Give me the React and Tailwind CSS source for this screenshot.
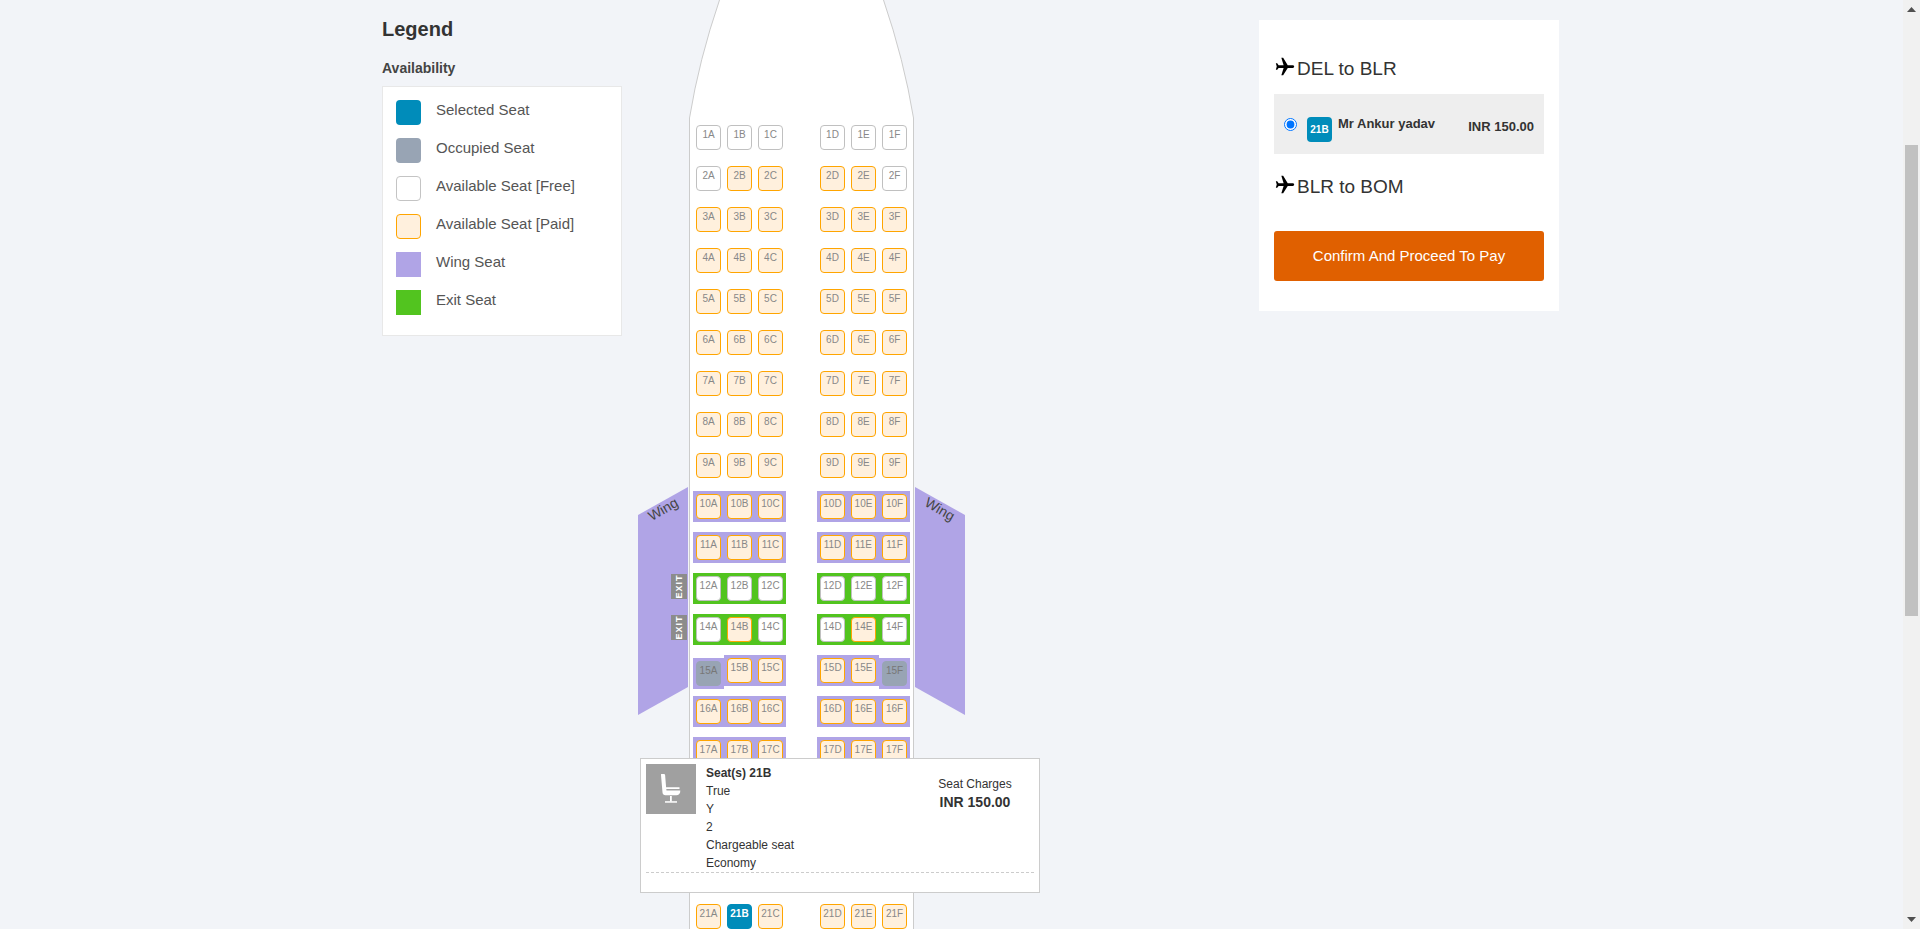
import React from 'react'

const legend = [
  { label: 'Selected Seat', box: 'bg-[#008cba] rounded-[4px]' },
  { label: 'Occupied Seat', box: 'bg-[#98a4b4] rounded-[4px]' },
  { label: 'Available Seat [Free]', box: 'bg-white border border-[#c4c4c4] rounded-[4px]' },
  { label: 'Available Seat [Paid]', box: 'bg-[#fff0dd] border border-[#ffa500] rounded-[4px]' },
  { label: 'Wing Seat', box: 'bg-[#b0a4e6]' },
  { label: 'Exit Seat', box: 'bg-[#52c41f]' },
]

// f = free, p = paid, o = occupied, s = selected
const rows = [
  { no: 1, seats: 'ffffff' },
  { no: 2, seats: 'fppppf' },
  { no: 3, seats: 'pppppp' },
  { no: 4, seats: 'pppppp' },
  { no: 5, seats: 'pppppp' },
  { no: 6, seats: 'pppppp' },
  { no: 7, seats: 'pppppp' },
  { no: 8, seats: 'pppppp' },
  { no: 9, seats: 'pppppp' },
  { no: 10, seats: 'pppppp', band: 'wing' },
  { no: 11, seats: 'pppppp', band: 'wing' },
  { no: 12, seats: 'ffffff', band: 'exit' },
  { no: 14, seats: 'fpffpf', band: 'exit' },
  { no: 15, seats: 'oppppo', band: 'wing' },
  { no: 16, seats: 'pppppp', band: 'wing' },
  { no: 17, seats: 'pppppp', band: 'wing' },
]

const seatStyles = {
  f: 'bg-white border border-[#c0c0c0] text-[#888]',
  p: 'bg-[#fff0dd] border border-[#ffa500] text-[#888]',
  o: 'bg-[#98a4b4] border border-[#98a4b4] text-[#777]',
  s: 'bg-[#008cba] border border-[#008cba] text-white font-bold',
}

const bandStyles = {
  wing: 'bg-[#b0a4e6]',
  exit: 'bg-[#52c41f]',
}

function Seat({ label, type, band }) {
  return (
    <div className={`w-[31px] h-[31px] p-[3px] ${band ? bandStyles[band] : ''} ${type === 'o' ? 'mt-[3px]' : ''}`}>
      <div className={`w-[25px] h-[25px] rounded-[4px] text-center text-[10px] leading-[18px] ${seatStyles[type]}`}>
        {label}
      </div>
    </div>
  )
}

function SeatRow({ row }) {
  const letters = ['A', 'B', 'C', 'D', 'E', 'F']
  const cell = (i) => (
    <Seat key={i} label={`${row.no}${letters[i]}`} type={row.seats[i]} band={row.band} />
  )
  return (
    <div className="flex justify-between items-start h-[31px] mb-[10px]">
      <div className="flex items-start">{[0, 1, 2].map(cell)}</div>
      <div className="flex items-start">{[3, 4, 5].map(cell)}</div>
    </div>
  )
}

function ExitTag({ className }) {
  return (
    <div className={`absolute left-[-18px] w-[16px] h-[25px] bg-[#8c8c8c] flex items-center justify-center ${className}`}>
      <span className="-rotate-90 text-white text-[9px] font-bold tracking-[1px] leading-none">EXIT</span>
    </div>
  )
}

function Wing({ side }) {
  const left = side === 'left'
  return (
    <div className={`absolute top-[487px] w-[50px] h-[228px] ${left ? 'left-[-51px]' : 'right-[-51px]'}`}>
      <svg width="50" height="228" className="block">
        <polygon
          points={left ? '50,0 0,28 0,228 50,200' : '0,0 50,28 50,228 0,200'}
          fill="#b0a4e6"
        />
      </svg>
      <span className={`absolute top-[15px] left-[9px] text-[14px] leading-none text-[#444] ${left ? '-rotate-[30deg]' : 'rotate-[30deg]'}`}>
        Wing
      </span>
    </div>
  )
}

function SeatMap() {
  return (
    <div className="relative w-[225px] shrink-0">
      <svg width="225" height="118" className="block">
        <path d="M30.5 0 Q10 60 0.5 118 L224.5 118 Q215 60 194.5 0 Z" fill="#fff" />
        <path d="M30.5 0 Q10 60 0.5 118 M194.5 0 Q215 60 224.5 118" fill="none" stroke="#ccc" strokeWidth="1" />
      </svg>
      <div className="bg-white border-x border-[#ccc] pt-[4px] pl-[3px] pr-[3px]">
        {rows.map((row) => <SeatRow key={row.no} row={row} />)}
        {/* rows 18-20 sit behind the seat popup */}
        <div className="h-[123px]" />
        <SeatRow row={{ no: 21, seats: 'pspppp' }} />
      </div>
      <Wing side="left" />
      <Wing side="right" />
      <ExitTag className="top-[574px]" />
      <ExitTag className="top-[615px]" />
      <SeatPopup />
    </div>
  )
}

function SeatPopup() {
  return (
    <div className="absolute left-[-49px] top-[758px] w-[400px] h-[135px] bg-white border border-[#ccc] px-[5px] pt-[5px] text-[12px] leading-[18px] text-[#333]">
      <div className="flex h-[108px]">
        <div className="w-[50px] h-[50px] bg-[#a0a0a0] shrink-0">
          <svg width="50" height="50" viewBox="0 0 50 50" fill="#fff">
            <path d="M15.5 10h2.5c.6 0 1 .4 1.1 1l1 12.3H33.5v1.6H20.3l.2 1.6h13.8c.2 3-1.5 4.8-4 4.8H19.5c-1.8 0-2.8-1-3-2.7L15 11c0-.5 0-1 .5-1z" />
            <rect x="24" y="32" width="1.8" height="5.5" />
            <rect x="19" y="37.2" width="12" height="1.5" />
          </svg>
        </div>
        <div className="ml-[10px] flex-1">
          <div className="font-bold">Seat(s) 21B</div>
          <div>True</div>
          <div>Y</div>
          <div>2</div>
          <div>Chargeable seat</div>
          <div>Economy</div>
        </div>
        <div className="w-[118px] pt-[11px] text-center">
          <div>Seat Charges</div>
          <div className="text-[14px] font-bold">INR 150.00</div>
        </div>
      </div>
      <div className="border-t border-dashed border-[#ccc]" />
    </div>
  )
}

function Route({ text, className = '' }) {
  return (
    <h3 className={`flex items-center h-[24px] text-[19px] leading-[24px] text-[#333] ${className}`}>
      <span className="w-[23px] shrink-0">
        <svg width="22" height="22" viewBox="0 0 24 24" fill="#000" className="block -mt-[4px]">
          <path transform="rotate(90 12 12)" d="M21 16v-2l-8-5V3.5c0-.83-.67-1.5-1.5-1.5S10 2.67 10 3.5V9l-8 5v2l8-2.5V19l-2 1.5V22l3.5-1 3.5 1v-1.5L13 19v-5.5l8 2.5z" />
        </svg>
      </span>
      {text}
    </h3>
  )
}

function Summary() {
  return (
    <div className="mt-[20px] w-[300px] h-[291px] shrink-0 bg-white px-[15px] pt-[37px]">
      <Route text="DEL to BLR" />
      <div className="mt-[13px] h-[60px] bg-[#eee] flex items-start pl-[10px] pr-[10px] pt-[23px] text-[#333] font-bold">
        <input type="radio" defaultChecked className="w-[13px] h-[13px] mt-[1px] accent-[#0075ff]" />
        <div className="ml-[10px] w-[25px] h-[25px] bg-[#008cba] rounded-[4px] text-white text-[10px] leading-[25px] text-center shrink-0">21B</div>
        <div className="ml-[6px] text-[13px] leading-[14px] flex-1 whitespace-nowrap">Mr Ankur yadav</div>
        <div className="text-[13px] leading-[14px] mt-[3px] whitespace-nowrap">INR 150.00</div>
      </div>
      <Route text="BLR to BOM" className="mt-[21px]" />
      <button className="mt-[32px] w-full h-[50px] rounded-[3px] bg-[#e06000] text-white text-[15px]">
        Confirm And Proceed To Pay
      </button>
    </div>
  )
}

function Scrollbar() {
  return (
    <div className="relative w-[17px] h-full shrink-0 bg-[#f1f1f1] flex flex-col items-center justify-between py-[7px]">
      <svg width="9" height="5"><polygon points="4.5,0 9,5 0,5" fill="#505050" /></svg>
      <div className="absolute top-[145px] left-[2px] w-[13px] h-[471px] bg-[#c1c1c1]" />
      <svg width="9" height="5"><polygon points="0,0 9,0 4.5,5" fill="#505050" /></svg>
    </div>
  )
}

export default function App() {
  return (
    <div className="flex h-screen overflow-hidden bg-[#f2f4f8] font-['Liberation_Sans',Arial,sans-serif]">
      <main className="flex-1 flex items-start pl-[382px] overflow-hidden h-full">
        <div className="w-[240px] shrink-0 pt-[17px] mr-[67px]">
          <h2 className="text-[20px] leading-[24px] font-bold text-[#333]">Legend</h2>
          <h4 className="mt-[17px] mb-[8px] text-[14px] leading-[20px] font-bold text-[#444]">Availability</h4>
          <div className="h-[250px] bg-white border border-[#e8e8e8] pt-[13px] pl-[13px]">
            {legend.map((item) => (
              <div key={item.label} className="flex items-start h-[25px] mb-[13px]">
                <div className={`w-[25px] h-[25px] shrink-0 ${item.box}`} />
                <span className="ml-[15px] text-[15px] leading-[20px] text-[#555]">{item.label}</span>
              </div>
            ))}
          </div>
        </div>
        <SeatMap />
        <div className="ml-[345px]">
          <Summary />
        </div>
      </main>
      <Scrollbar />
    </div>
  )
}
